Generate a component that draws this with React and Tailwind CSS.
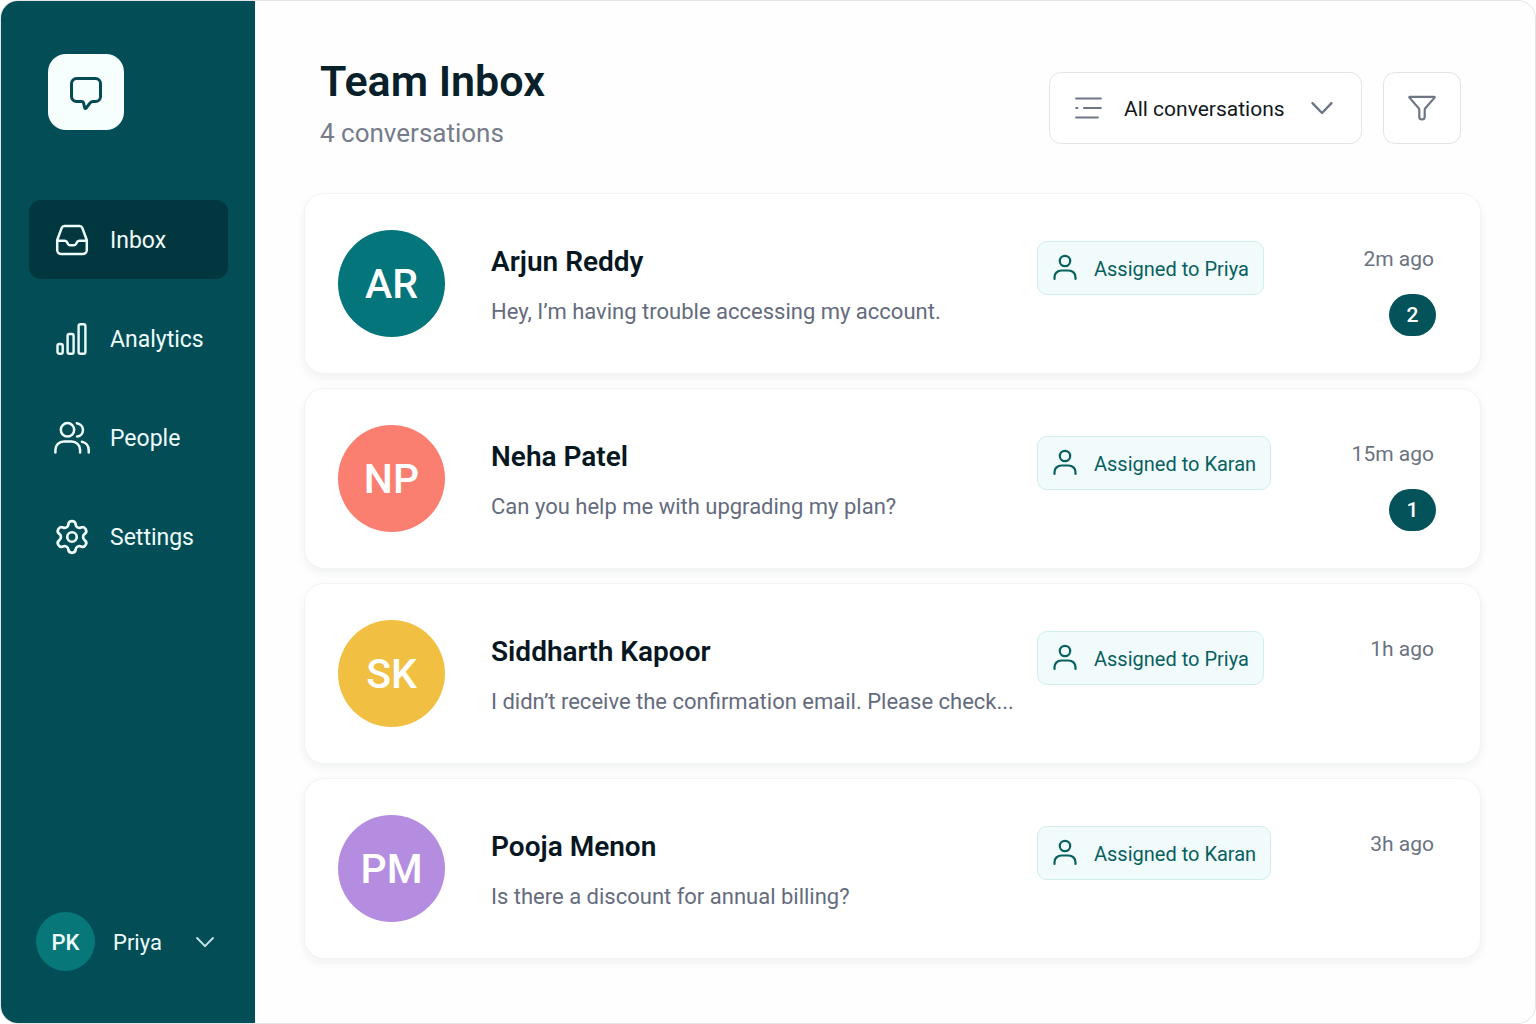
import React from "react";
import { Settings } from "lucide-react";

const iconProps = {
  fill: "none",
  stroke: "currentColor",
  strokeLinecap: "round",
  strokeLinejoin: "round",
  "aria-hidden": true,
};

function LogoIcon() {
  return (
    <svg {...iconProps} width="36" height="36" viewBox="0 0 36 36" strokeWidth="3">
      <path d="M8.5 3.5h19a5 5 0 0 1 5 5v13a5 5 0 0 1-5 5h-2.700c-1.200 0-1.800.4-2.500 1.200l-4.100 5.300c-.6.8-1.200.6-1.500-.3l-1.200-4.900c-.3-.9-.8-1.300-1.800-1.300H8.500a5 5 0 0 1-5-5v-13a5 5 0 0 1 5-5z" />
    </svg>
  );
}

function InboxIcon() {
  return (
    <svg {...iconProps} width="36" height="36" viewBox="0 0 36 36" strokeWidth="2.5">
      <path d="M10.500 4h15a3 3 0 0 1 2.800 1.900L32.400 17c.3.800.4 1.200.4 2V28a4 4 0 0 1-4 4H7.200a4 4 0 0 1-4-4v-9c0-.8.1-1.200.4-2L7.700 5.900A3 3 0 0 1 10.500 4z" />
      <path d="M3.400 18.700h7.400c.9 0 1.400.3 1.900 1l1.400 2.400c.5.8 1 1.100 1.900 1.100h4c.9 0 1.400-.3 1.900-1.100l1.400-2.400c.5-.7 1-1 1.900-1h7.400" />
    </svg>
  );
}

function AnalyticsIcon() {
  return (
    <svg {...iconProps} width="36" height="36" viewBox="0 0 36 36" strokeWidth="2.4">
      <rect x="3.500" y="23" width="5.200" height="9.700" rx="1.800" />
      <rect x="13.600" y="13" width="6" height="19.700" rx="1.800" />
      <rect x="24.600" y="3.200" width="6.800" height="29.500" rx="1.800" />
    </svg>
  );
}

function PeopleIcon() {
  return (
    <svg {...iconProps} width="36" height="36" viewBox="0 0 36 36" strokeWidth="2.5">
      <circle cx="13.500" cy="9.800" r="6.700" />
      <path d="M1.400 32.500v-2.500a8.500 8.500 0 0 1 8.500-8.500h7.700a8.500 8.500 0 0 1 8.500 8.500v2.500" />
      <path d="M22.800 3.200c3.700.6 6.200 3.300 6.200 6.700s-2.500 6.100-5.800 6.700" />
      <path d="M27.900 21.700c4.100.8 6.800 4.200 6.800 8.300v2.500" />
    </svg>
  );
}

function ChevronIcon({ className }) {
  return (
    <svg {...iconProps} className={className} viewBox="0 0 24 24" strokeWidth="2.400">
      <path d="M2.500 7.200 12 17l9.500-9.800" />
    </svg>
  );
}

function ListIcon() {
  return (
    <svg {...iconProps} width="28" height="28" viewBox="0 0 28 28" strokeWidth="2.200">
      <path d="M2.200 4.500h24.600M2.200 14h1.200M10 14h16.800M2.200 23.500h21.600" />
    </svg>
  );
}

function FilterIcon() {
  return (
    <svg {...iconProps} width="30" height="30" viewBox="0 0 30 30" strokeWidth="2.200">
      <path d="M2.800 3.800h24.400c.5 0 .7.400.4.800L18.500 15c-.6.700-.8 1.200-.8 2v7c0 1.500-1.200 2.500-2.700 2.500s-2.700-1-2.700-2.500v-7c0-.8-.2-1.300-.8-2L2.400 4.600c-.3-.4-.1-.8.4-.8z" />
    </svg>
  );
}

function PersonIcon() {
  return (
    <svg {...iconProps} className="shrink-0" width="26" height="28" viewBox="0 0 26 28" strokeWidth="2.200">
      <circle cx="13" cy="7" r="5.200" />
      <path d="M2.500 25v-1.700c0-4 3-6.800 7-6.800h7c4 0 7 2.800 7 6.800v1.700" />
    </svg>
  );
}

const navItems = [
  { label: "Inbox", icon: <InboxIcon />, active: true },
  { label: "Analytics", icon: <AnalyticsIcon /> },
  { label: "People", icon: <PeopleIcon /> },
  { label: "Settings", icon: <Settings size={38} strokeWidth={1.7} className="-mx-px" aria-hidden /> },
];

const conversations = [
  { initials: "AR", name: "Arjun Reddy", color: "bg-[#04757a]", text: "Hey, I’m having trouble accessing my account.", assignee: "Priya", time: "2m ago", unread: 2 },
  { initials: "NP", name: "Neha Patel", color: "bg-[#fb7f70]", text: "Can you help me with upgrading my plan?", assignee: "Karan", time: "15m ago", unread: 1 },
  { initials: "SK", name: "Siddharth Kapoor", color: "bg-[#f1bf41]", text: "I didn’t receive the confirmation email. Please check...", assignee: "Priya", time: "1h ago" },
  { initials: "PM", name: "Pooja Menon", color: "bg-[#b58de0]", text: "Is there a discount for annual billing?", assignee: "Karan", time: "3h ago" },
];

function Sidebar() {
  return (
    <aside className="flex w-[254px] shrink-0 flex-col bg-[#024d56] pt-[53px] pr-[27px] pb-[52px] pl-7 text-[#effcfc]">
      <div className="ml-[19px] flex size-[76px] items-center justify-center rounded-[18px] bg-[#f7fefe] pt-0.5 text-[#064b53]">
        <LogoIcon />
      </div>
      <nav className="mt-[70px] flex flex-col gap-5" aria-label="Main">
        {navItems.map((item) => (
          <a
            key={item.label}
            href="#"
            aria-current={item.active ? "page" : undefined}
            className={
              item.active
                ? "flex h-[79px] items-center gap-5 rounded-xl bg-[#02373f] pl-[25px] text-[23px]"
                : "flex h-[79px] items-center gap-5 rounded-xl pl-[25px] text-[23px]"
            }
          >
            {item.icon}
            <span className="pt-1">{item.label}</span>
          </a>
        ))}
      </nav>
      <button type="button" className="mt-auto ml-[7px] flex items-center text-[22px]">
        <span className="flex size-[59px] items-center justify-center rounded-full bg-[#07777a] pt-0.5 text-[22px] font-medium">PK</span>
        <span className="ml-[18px] pt-0.5">Priya</span>
        <ChevronIcon className="mr-[13px] ml-auto size-5 text-[#c3e3e6]" />
      </button>
    </aside>
  );
}

function ConversationCard({ item }) {
  return (
    <li className="flex h-[181px] items-center rounded-[20px] border border-[#f2f3f4] bg-white pr-11 pl-[33px] shadow-[0_4px_10px_rgba(20,30,40,0.06)]">
      <div className={`flex size-[107px] shrink-0 items-center justify-center rounded-full pt-0.5 text-[41px] font-medium text-white ${item.color}`}>
        {item.initials}
      </div>
      <div className="ml-[46px] min-w-0 flex-1 pt-1">
        <h2 className="text-[28px] leading-9 font-semibold text-[#07171f]">{item.name}</h2>
        <p className="mt-4 truncate text-[22px] leading-8 text-[#646b7d]">{item.text}</p>
      </div>
      <div className="flex w-[399px] shrink-0 items-start justify-between self-start pt-[47px]">
        <span className="flex h-[54px] items-center gap-4 rounded-[10px] border border-[#d0eeec] bg-[#f1fbfb] px-[14px] text-[20px] text-[#07605f]">
          <PersonIcon />
          <span className="pt-0.5">Assigned to {item.assignee}</span>
        </span>
        <div className="flex flex-col items-end">
          <time className="pr-0.5 text-[21px] leading-9 text-[#6b7280]">{item.time}</time>
          {item.unread && (
            <span className="mt-[17px] flex h-[42px] w-[47px] items-center justify-center rounded-full bg-[#04525a] pt-0.5 text-[21px] font-medium text-white">
              {item.unread}
            </span>
          )}
        </div>
      </div>
    </li>
  );
}

export default function App() {
  return (
    <div className="flex min-h-screen overflow-hidden rounded-[18px] border border-[#e3e5e6] bg-[#fefefe] font-['Roboto',sans-serif]">
      <Sidebar />
      <main className="min-w-0 flex-1 pr-[54px] pl-[49px]">
        <header className="flex items-start justify-between pt-[54px] pr-5 pl-4">
          <div>
            <h1 className="text-[43px] leading-[52px] font-semibold text-[#07202a]">Team Inbox</h1>
            <p className="mt-2 text-[26px] leading-9 text-[#757c8a]">4 conversations</p>
          </div>
          <div className="mt-[17px] flex gap-[21px]">
            <div className="relative h-[72px] w-[313px] text-[#6e7685]">
              <select
                aria-label="Conversation filter"
                className="size-full appearance-none rounded-xl border border-[#e1e3e6] bg-white pt-1 pl-[74px] text-[21px] text-[#111820]"
              >
                <option>All conversations</option>
              </select>
              <span className="pointer-events-none absolute inset-y-0 left-[25px] flex items-center">
                <ListIcon />
              </span>
              <ChevronIcon className="pointer-events-none absolute top-6 right-7 size-6" />
            </div>
            <button
              type="button"
              aria-label="Filter"
              className="flex h-[72px] w-[78px] items-center justify-center rounded-xl border border-[#e1e3e6] bg-white text-[#6e7685]"
            >
              <FilterIcon />
            </button>
          </div>
        </header>
        <ul className="mt-[42px] flex flex-col gap-[14px] pb-16">
          {conversations.map((item) => (
            <ConversationCard key={item.name} item={item} />
          ))}
        </ul>
      </main>
    </div>
  );
}
